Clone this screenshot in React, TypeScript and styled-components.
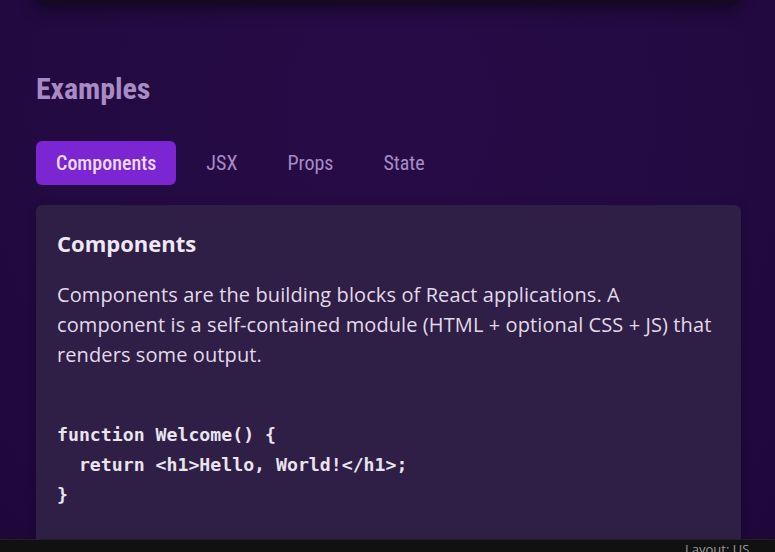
import React, { useState } from "react";
import styled, { createGlobalStyle } from "styled-components";

const Global = createGlobalStyle`
  html, body { margin: 0; padding: 0; }
  body {
    background: #240a42;
    font-family: "Open Sans", "Noto Sans", sans-serif;
    overflow: hidden;
    height: 552px;
  }
`;

const Page = styled.div`
  width: 775px;
  height: 552px;
  background: radial-gradient(ellipse at 50% 20%, #270b47 0%, #230a41 60%, #1f073a 100%);
  position: relative;
  overflow: hidden;
`;

const TopCard = styled.div`
  margin: -40px 36px 0 36px;
  height: 45px;
  background: #170824;
  border-radius: 0 0 6px 6px;
  box-shadow: 0 4px 16px rgba(0, 0, 0, 0.45);
`;

const Section = styled.section`
  padding: 64px 34px 0 36px;
`;

const Heading = styled.h2`
  margin: 0;
  font-family: "Roboto Condensed", "Liberation Sans Narrow", Roboto, sans-serif;
  font-stretch: condensed;
  font-weight: 700;
  font-size: 30px;
  line-height: 40px;
  color: #a88bc4;
  letter-spacing: -0.1px;
`;

const Tabs = styled.div`
  display: flex;
  margin-top: 32px;
`;

const Tab = styled.button<{ $active?: boolean }>`
  height: 44px;
  padding: 0 20px;
  margin-right: 10px;
  border: none;
  border-radius: 6px;
  cursor: pointer;
  font-family: "Roboto Condensed", "Liberation Sans Narrow", Roboto, sans-serif;
  font-stretch: condensed;
  font-size: 20px;
  font-weight: ${(p) => (p.$active ? 500 : 400)};
  background: ${(p) => (p.$active ? "#7b25d3" : "transparent")};
  color: ${(p) => (p.$active ? "#eadcf8" : "#a88bc4")};
`;

const Card = styled.div`
  margin-top: 20px;
  background: #2f1e45;
  border-radius: 6px;
  padding: 24px 21px 60px 21px;
  box-shadow: 0 2px 10px rgba(0, 0, 0, 0.25);
`;

const CardTitle = styled.h3`
  margin: 0;
  font-family: "Open Sans", "Noto Sans", sans-serif;
  font-weight: 700;
  font-size: 22px;
  line-height: 28px;
  color: #eee8f4;
`;

const Para = styled.p`
  margin: 23px 0 0 0;
  font-size: 20px;
  letter-spacing: 0.1px;
  line-height: 30px;
  color: #e2daea;
`;

const Code = styled.pre`
  margin: 50px 0 0 0;
  font-family: "DejaVu Sans Mono", "Liberation Mono", monospace;
  font-weight: 700;
  font-size: 18.2px;
  line-height: 30px;
  color: #eae4f0;
`;

const StatusBar = styled.div`
  position: absolute;
  left: 0;
  right: 0;
  bottom: 0;
  height: 12px;
  background: #111111;
  border-top: 1px solid #222;
  overflow: hidden;
`;

const StatusText = styled.span`
  position: absolute;
  left: 685px;
  top: 1px;
  font-family: "Open Sans", sans-serif;
  font-size: 13px;
  line-height: 16px;
  color: #9a9a9a;
`;

const tabs = ["Components", "JSX", "Props", "State"];

export default function App() {
  const [active, setActive] = useState(0);
  return (
    <Page>
      <Global />
      <TopCard />
      <Section>
        <Heading>Examples</Heading>
        <Tabs>
          {tabs.map((t, i) => (
            <Tab key={t} $active={i === active} onClick={() => setActive(i)}>
              {t}
            </Tab>
          ))}
        </Tabs>
        <Card>
          <CardTitle>Components</CardTitle>
          <Para>
            Components are the building blocks of React applications. A component is a
            self-contained module (HTML + optional CSS + JS) that renders some output.
          </Para>
          <Code>{`function Welcome() {
  return <h1>Hello, World!</h1>;
}`}</Code>
        </Card>
      </Section>
      <StatusBar>
        <StatusText>Layout: US</StatusText>
      </StatusBar>
    </Page>
  );
}
